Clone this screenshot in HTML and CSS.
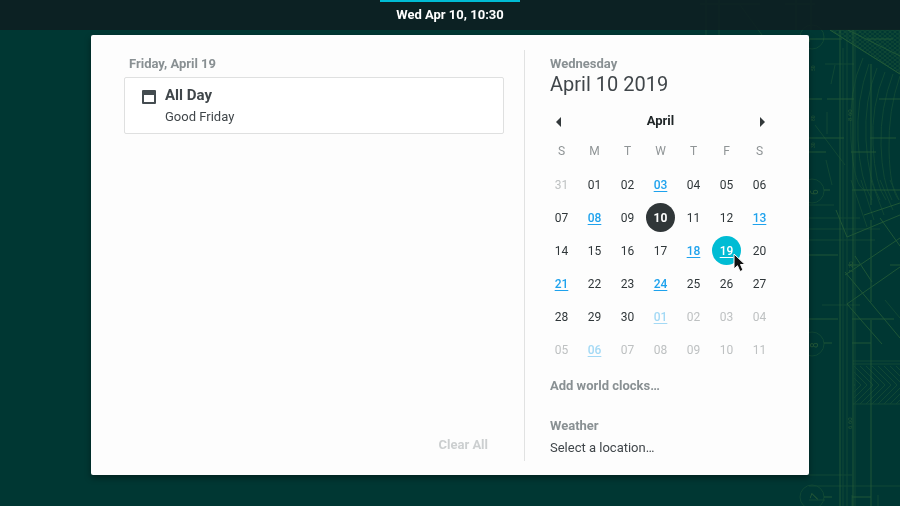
FILE: index.html
```html
<!DOCTYPE html>
<html lang="en">
<head>
<meta charset="utf-8">
<meta name="viewport" content="width=device-width, initial-scale=1">
<title>Calendar</title>
<link rel="stylesheet" href="styles.css">
</head>
<body>
<svg class="wallpaper" viewBox="700 0 200 506" width="200" height="506" aria-hidden="true">
  <defs>
    <pattern id="mesh" width="5" height="4" patternUnits="userSpaceOnUse"><path d="M0 4L5 0M0 0L5 4"/></pattern>
    <clipPath id="hatch-area"><path d="M854 366H900V404H854Z"/></clipPath>
  </defs>
  <g class="lines-faint">
    <path d="M706 0V35M719 0V35M740 5L762 35M843 48V506M847 30V506M855 30V506M825 64H854M835 65L831 84M827 112V134M815 125L845 165M826 160L832 185"/>
    <path d="M863 58Q848 90 851 140T866 190M869 64Q856 100 858 140T872 200M877 68Q864 100 866 140T880 200M885 72Q871 105 873 145T886 200M893 74Q880 108 881 145T892 200M900 76Q888 110 889 150T899 200"/>
    <path d="M809 205H834M809 218H860M809 229H880M809 240H875M851 180L867 227M861 180L874 220M871 180L884 215M880 180L893 210M890 180L899 200"/>
    <path d="M853 361H900M853 364H900M853 404H900M885 300L900 318M822 305H860M809 475H852M809 486H900M809 500H825M852 495V506M878 495V506"/>
    <circle cx="812" cy="37" r="12"/><circle cx="812" cy="191" r="12"/><circle cx="812" cy="344" r="12"/><circle cx="812" cy="497" r="12"/>
    <path clip-path="url(#hatch-area)" d="M836 366L855 385L836 404M842 366L861 385L842 404M848 366L867 385L848 404M854 366L873 385L854 404M860 366L879 385L860 404M866 366L885 385L866 404M872 366L891 385L872 404M878 366L897 385L878 404M884 366L903 385L884 404M890 366L909 385L890 404M896 366L915 385L896 404"/>
    <path d="M830 30L900 30V74Z" fill="url(#mesh)"/>
    <path d="M700 4H760M785 4H815M796 0V30M811 0V30"/>
  </g>
  <g class="lines">
    <path d="M840 30V506M853 30V506M871 64V205M871 220V302M871 320V506M830 30L900 74M848 30L900 56"/>
    <path d="M809 39H842M867 39H893M809 99H822M827 99H854M879 99H900M809 138H844M870 138H896M809 152H826M851 152H876M852 190H900M809 255H838M848 265H860M890 265H900M824 190H830M809 319H838M852 319H894M852 343H871M824 343H832M852 497H871M824 497H832"/>
    <path d="M836 210L847 237L900 215M864 215L900 203M880 218L900 246M845 275L900 238M847 304L900 267M855 256L872 282M845 272L900 338M847 304L882 344"/>
  </g>
  <g class="wallpaper-labels">
    <text transform="translate(810 43) rotate(-90)" font-size="9">5</text>
    <text transform="translate(818 195) rotate(-90)" font-size="10">6</text>
    <text transform="translate(818 348) rotate(-90)" font-size="10">8</text>
    <text transform="translate(817 501) rotate(-70)" font-size="11">7</text>
    <text transform="translate(852 121) rotate(-90)" font-size="6">8.60</text>
    <text transform="translate(853 273) rotate(-90)" font-size="6">7.20</text>
    <text transform="translate(852 429) rotate(-90)" font-size="6">6.60</text>
    <text transform="translate(815 71) rotate(-90)" font-size="5">50</text>
    <text transform="translate(815 121) rotate(-90)" font-size="5">80</text>
    <text transform="translate(815 148) rotate(-90)" font-size="5">30</text>
  </g>
</svg>

<header class="topbar">
  <button class="clock" type="button" aria-expanded="true">Wed Apr 10, 10:30</button>
</header>

<main class="panel">
  <section class="events">
    <h2 class="label events-date">Friday, April 19</h2>
    <article class="event">
      <svg class="event-icon" viewBox="0 0 14 14" width="14" height="14" aria-hidden="true"><path fill-rule="evenodd" d="M1 0H13Q14 0 14 1V13Q14 14 13 14H1Q0 14 0 13V1Q0 0 1 0ZM2 5V12H12V5Z"/></svg>
      <div>
        <h3 class="event-time">All Day</h3>
        <p class="event-name">Good Friday</p>
      </div>
    </article>
    <button class="clear" type="button" disabled>Clear All</button>
  </section>

  <section class="side">
    <header class="today">
      <p class="label">Wednesday</p>
      <h1 class="today-date">April 10 2019</h1>
    </header>
    <div class="calendar">
      <nav class="month">
        <button class="arrow" type="button" aria-label="Previous month"><svg viewBox="0 0 5 10" width="5" height="10"><path d="M5 0V10L0 5Z"/></svg></button>
        <h2 class="month-name">April</h2>
        <button class="arrow" type="button" aria-label="Next month"><svg viewBox="0 0 5 10" width="5" height="10"><path d="M0 0V10L5 5Z"/></svg></button>
      </nav>
      <table class="days">
        <thead><tr><th>S</th><th>M</th><th>T</th><th>W</th><th>T</th><th>F</th><th>S</th></tr></thead>
        <tbody>
          <tr><td><button class="day other">31</button></td><td><button class="day">01</button></td><td><button class="day">02</button></td><td><button class="day busy">03</button></td><td><button class="day">04</button></td><td><button class="day">05</button></td><td><button class="day">06</button></td></tr>
          <tr><td><button class="day">07</button></td><td><button class="day busy">08</button></td><td><button class="day">09</button></td><td><button class="day current">10</button></td><td><button class="day">11</button></td><td><button class="day">12</button></td><td><button class="day busy">13</button></td></tr>
          <tr><td><button class="day">14</button></td><td><button class="day">15</button></td><td><button class="day">16</button></td><td><button class="day">17</button></td><td><button class="day busy">18</button></td><td><button class="day busy selected">19<svg class="pointer" viewBox="0 0 13 20" width="13" height="20" aria-hidden="true"><path d="M1 1V16L4.500 12.700L7 18.500L10 17.200L7.500 11.500H12Z"/></svg></button></td><td><button class="day">20</button></td></tr>
          <tr><td><button class="day busy">21</button></td><td><button class="day">22</button></td><td><button class="day">23</button></td><td><button class="day busy">24</button></td><td><button class="day">25</button></td><td><button class="day">26</button></td><td><button class="day">27</button></td></tr>
          <tr><td><button class="day">28</button></td><td><button class="day">29</button></td><td><button class="day">30</button></td><td><button class="day busy other">01</button></td><td><button class="day other">02</button></td><td><button class="day other">03</button></td><td><button class="day other">04</button></td></tr>
          <tr><td><button class="day other">05</button></td><td><button class="day busy other">06</button></td><td><button class="day other">07</button></td><td><button class="day other">08</button></td><td><button class="day other">09</button></td><td><button class="day other">10</button></td><td><button class="day other">11</button></td></tr>
        </tbody>
      </table>
    </div>
    <button class="link label" type="button">Add world clocks…</button>
    <div class="weather">
      <h2 class="label">Weather</h2>
      <button class="link" type="button">Select a location…</button>
    </div>
  </section>
</main>
</body>
</html>
```
FILE: styles.css
```css
* {
  box-sizing: border-box;
  margin: 0;
}

body {
  min-height: 100vh;
  overflow: hidden;
  background: #003733;
  color: #40464a;
  font: 13px/20px Roboto, "Liberation Sans", sans-serif;
}

button {
  padding: 0;
  border: 0;
  background: none;
  color: inherit;
  font: inherit;
}

h1, h2, h3 {
  font: inherit;
}

.wallpaper {
  position: absolute;
  top: 0;
  right: 0;
  z-index: -1;
  fill: none;
}

.lines,
.lines-faint,
.wallpaper pattern {
  stroke: #286038;
  stroke-width: 1;
}

.lines {
  opacity: 0.75;
}

.lines-faint {
  opacity: 0.4;
}

.wallpaper-labels {
  fill: #3c6e3a;
  opacity: 0.6;
}

.topbar {
  display: flex;
  justify-content: center;
  height: 30px;
  background: rgba(14, 30, 33, 0.86);
}

.clock {
  padding: 0 16px 2px;
  border-top: 2px solid #00bcd4;
  color: #fff;
  font-weight: 700;
}

.panel {
  display: flex;
  width: 80%;
  max-width: 718px;
  min-height: 440px;
  margin: 5px auto 0;
  padding: 15px 0 14px;
  border-radius: 2px;
  background: #fdfdfd;
  box-shadow: 0 3px 6px rgba(0, 0, 0, 0.4);
}

.events {
  display: flex;
  flex: 1;
  flex-direction: column;
  padding: 4px 20px 6px 33px;
}

.label {
  color: #899093;
  font-weight: 700;
}

.events-date {
  padding-left: 5px;
}

.event {
  display: flex;
  gap: 9px;
  margin-top: 3px;
  padding: 7px 17px 6px;
  border: 1px solid #dfe0e0;
  border-radius: 2px;
  background: #fff;
}

.event-icon {
  margin-top: 5px;
  fill: #444c50;
}

.event-time {
  font-size: 15px;
  font-weight: 700;
}

.event-name {
  padding-top: 2px;
}

.clear {
  align-self: flex-end;
  margin-top: auto;
  padding: 0 16px;
  color: #cccfd0;
  font-weight: 700;
}

.side {
  width: 285px;
  padding: 4px 32px 0 20px;
  border-left: 1px solid #e1e2e2;
}

.today,
.link,
.weather {
  padding-left: 5px;
}

.today-date {
  font-size: 20px;
  line-height: 21px;
}

.calendar {
  width: 231px;
}

.month {
  display: flex;
  align-items: center;
  justify-content: space-between;
  margin-top: 15px;
}

.arrow {
  display: grid;
  width: 26px;
  height: 22px;
  padding-top: 2px;
  place-items: center;
  fill: #33393b;
}

.month-name {
  color: #202628;
  font-weight: 700;
}

.days {
  width: 100%;
  margin-top: 3px;
  border-collapse: collapse;
  table-layout: fixed;
  font-size: 12px;
}

.days th,
.days td {
  height: 33px;
  padding: 0;
  text-align: center;
}

.days th {
  padding-bottom: 2px;
  color: #8f9496;
  font-weight: 400;
}

.day {
  position: relative;
  display: block;
  width: 29px;
  height: 29px;
  margin: auto;
  border-radius: 50%;
  color: #30373a;
}

.busy {
  color: #1ea2ed;
  font-weight: 500;
  text-decoration: underline;
  text-underline-offset: 2px;
}

.other {
  color: #bec1c2;
}

.busy.other {
  color: #a3d9f5;
}

.current {
  background: #303638;
  color: #fff;
  font-weight: 700;
}

.selected {
  background: #00bcd4;
  color: #fff;
}

.pointer {
  position: absolute;
  top: 17px;
  left: 21px;
  z-index: 1;
  fill: #111;
  stroke: #fff;
}

.link {
  display: block;
}

.link.label {
  margin-top: 10px;
}

.weather {
  margin-top: 20px;
}

.weather .link {
  margin-top: 2px;
  padding: 0;
}
```
